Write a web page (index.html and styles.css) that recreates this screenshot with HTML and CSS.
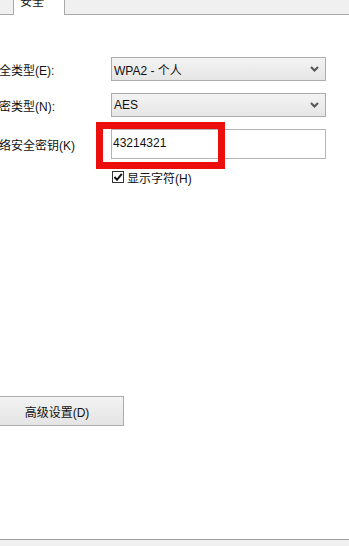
FILE: index.html
```html
<!DOCTYPE html>
<html lang="zh-CN">
<head>
  <meta charset="UTF-8" />
  <title>无线网络属性 - 安全</title>
  <link rel="stylesheet" href="styles.css">
</head>
<body>
  <div class="window">

    <!-- Tabs -->
    <div class="tabs">
      <div class="tab-gap tab-gap-left"></div>
      <div class="tab active">安全</div>
      <div class="tab-gap"></div>
    </div>

    <!-- Security settings -->
    <div class="content">
      <div class="row">
        <label class="label">安全类型(E):</label>
        <div class="select">
          <span>WPA2 - 个人</span>
          <svg class="chevron" width="9" height="6" viewBox="0 0 9 6"><path d="M1 1 L4.5 4.5 L8 1" fill="none" stroke="#555" stroke-width="2"/></svg>
        </div>
      </div>

      <div class="row">
        <label class="label">加密类型(N):</label>
        <div class="select">
          <span>AES</span>
          <svg class="chevron" width="9" height="6" viewBox="0 0 9 6"><path d="M1 1 L4.5 4.5 L8 1" fill="none" stroke="#555" stroke-width="2"/></svg>
        </div>
      </div>

      <div class="row">
        <label class="label">网络安全密钥(K)</label>
        <div class="key-wrap">
          <input class="key-input" type="text" value="43214321" />
          <div class="highlight"></div>
        </div>
      </div>

      <div class="check-row">
        <span class="checkbox">
          <svg width="10" height="10" viewBox="0 0 10 10"><path d="M1.5 5 L4 7.8 L8.8 1.8" fill="none" stroke="#111" stroke-width="2"/></svg>
        </span>
        <span>显示字符(H)</span>
      </div>

      <button class="adv-btn">高级设置(D)</button>
    </div>

    <div class="footer"></div>
  </div>
</body>
</html>
```

FILE: styles.css
```css
* {
  box-sizing: border-box;
}

body {
  margin: 0;
  background: #fff;
  font-family: "Liberation Sans", "Noto Sans CJK SC", sans-serif;
  font-size: 12px;
  color: #111;
  overflow: hidden;
}

.window {
  height: 546px;
  display: flex;
  flex-direction: column;
  overflow: hidden;
}

.tabs {
  display: flex;
  height: 15px;
}

.tab-gap {
  flex: 1;
  background: #f0f0f0;
  border-bottom: 1px solid #a9a9a9;
}

.tab-gap-left {
  flex: 0 0 13px;
}

.tab {
  width: 52px;
  background: #fff;
  border-left: 1px solid #a9a9a9;
  border-right: 1px solid #a9a9a9;
  padding-left: 6px;
  line-height: 12px;
  margin-top: -4px;
  height: 19px;
}

.content {
  flex: 1;
  padding-top: 42px;
}

.row {
  display: flex;
  align-items: center;
  margin-bottom: 12px;
}

.label {
  width: 124px;
  margin-left: -13px;
  white-space: nowrap;
}

.select {
  width: 215px;
  height: 24px;
  border: 1px solid #acacac;
  background: linear-gradient(#f3f3f3, #e6e6e6);
  display: flex;
  align-items: center;
  justify-content: space-between;
  padding: 0 6px 0 2px;
}

.chevron {
  display: block;
}

.key-wrap {
  position: relative;
  width: 215px;
  height: 30px;
}

.key-input {
  width: 100%;
  height: 30px;
  border: 1px solid #b4b4b4;
  padding: 0 0 2px 1px;
  font-family: inherit;
  font-size: 12px;
  color: #111;
  background: #fff;
  outline: none;
}

.highlight {
  position: absolute;
  left: -15px;
  top: -7px;
  width: 129px;
  height: 47px;
  border: 7px solid #ec0d0d;
}

.check-row {
  display: flex;
  align-items: center;
  gap: 3px;
  margin: 5px 0 0 112px;
  height: 12px;
}

.checkbox {
  width: 12px;
  height: 12px;
  border: 1px solid #333;
  display: flex;
  align-items: center;
  justify-content: center;
  background: #fff;
}

.adv-btn {
  display: block;
  margin: 213px 0 0 -10px;
  width: 134px;
  height: 30px;
  border: 1px solid #acacac;
  background: linear-gradient(#f2f2f2, #e4e4e4);
  font-family: inherit;
  font-size: 12px;
  color: #111;
  padding: 0;
}

.footer {
  height: 7px;
  background: #f0f0f0;
  border-top: 1px solid #a0a0a0;
}
```
